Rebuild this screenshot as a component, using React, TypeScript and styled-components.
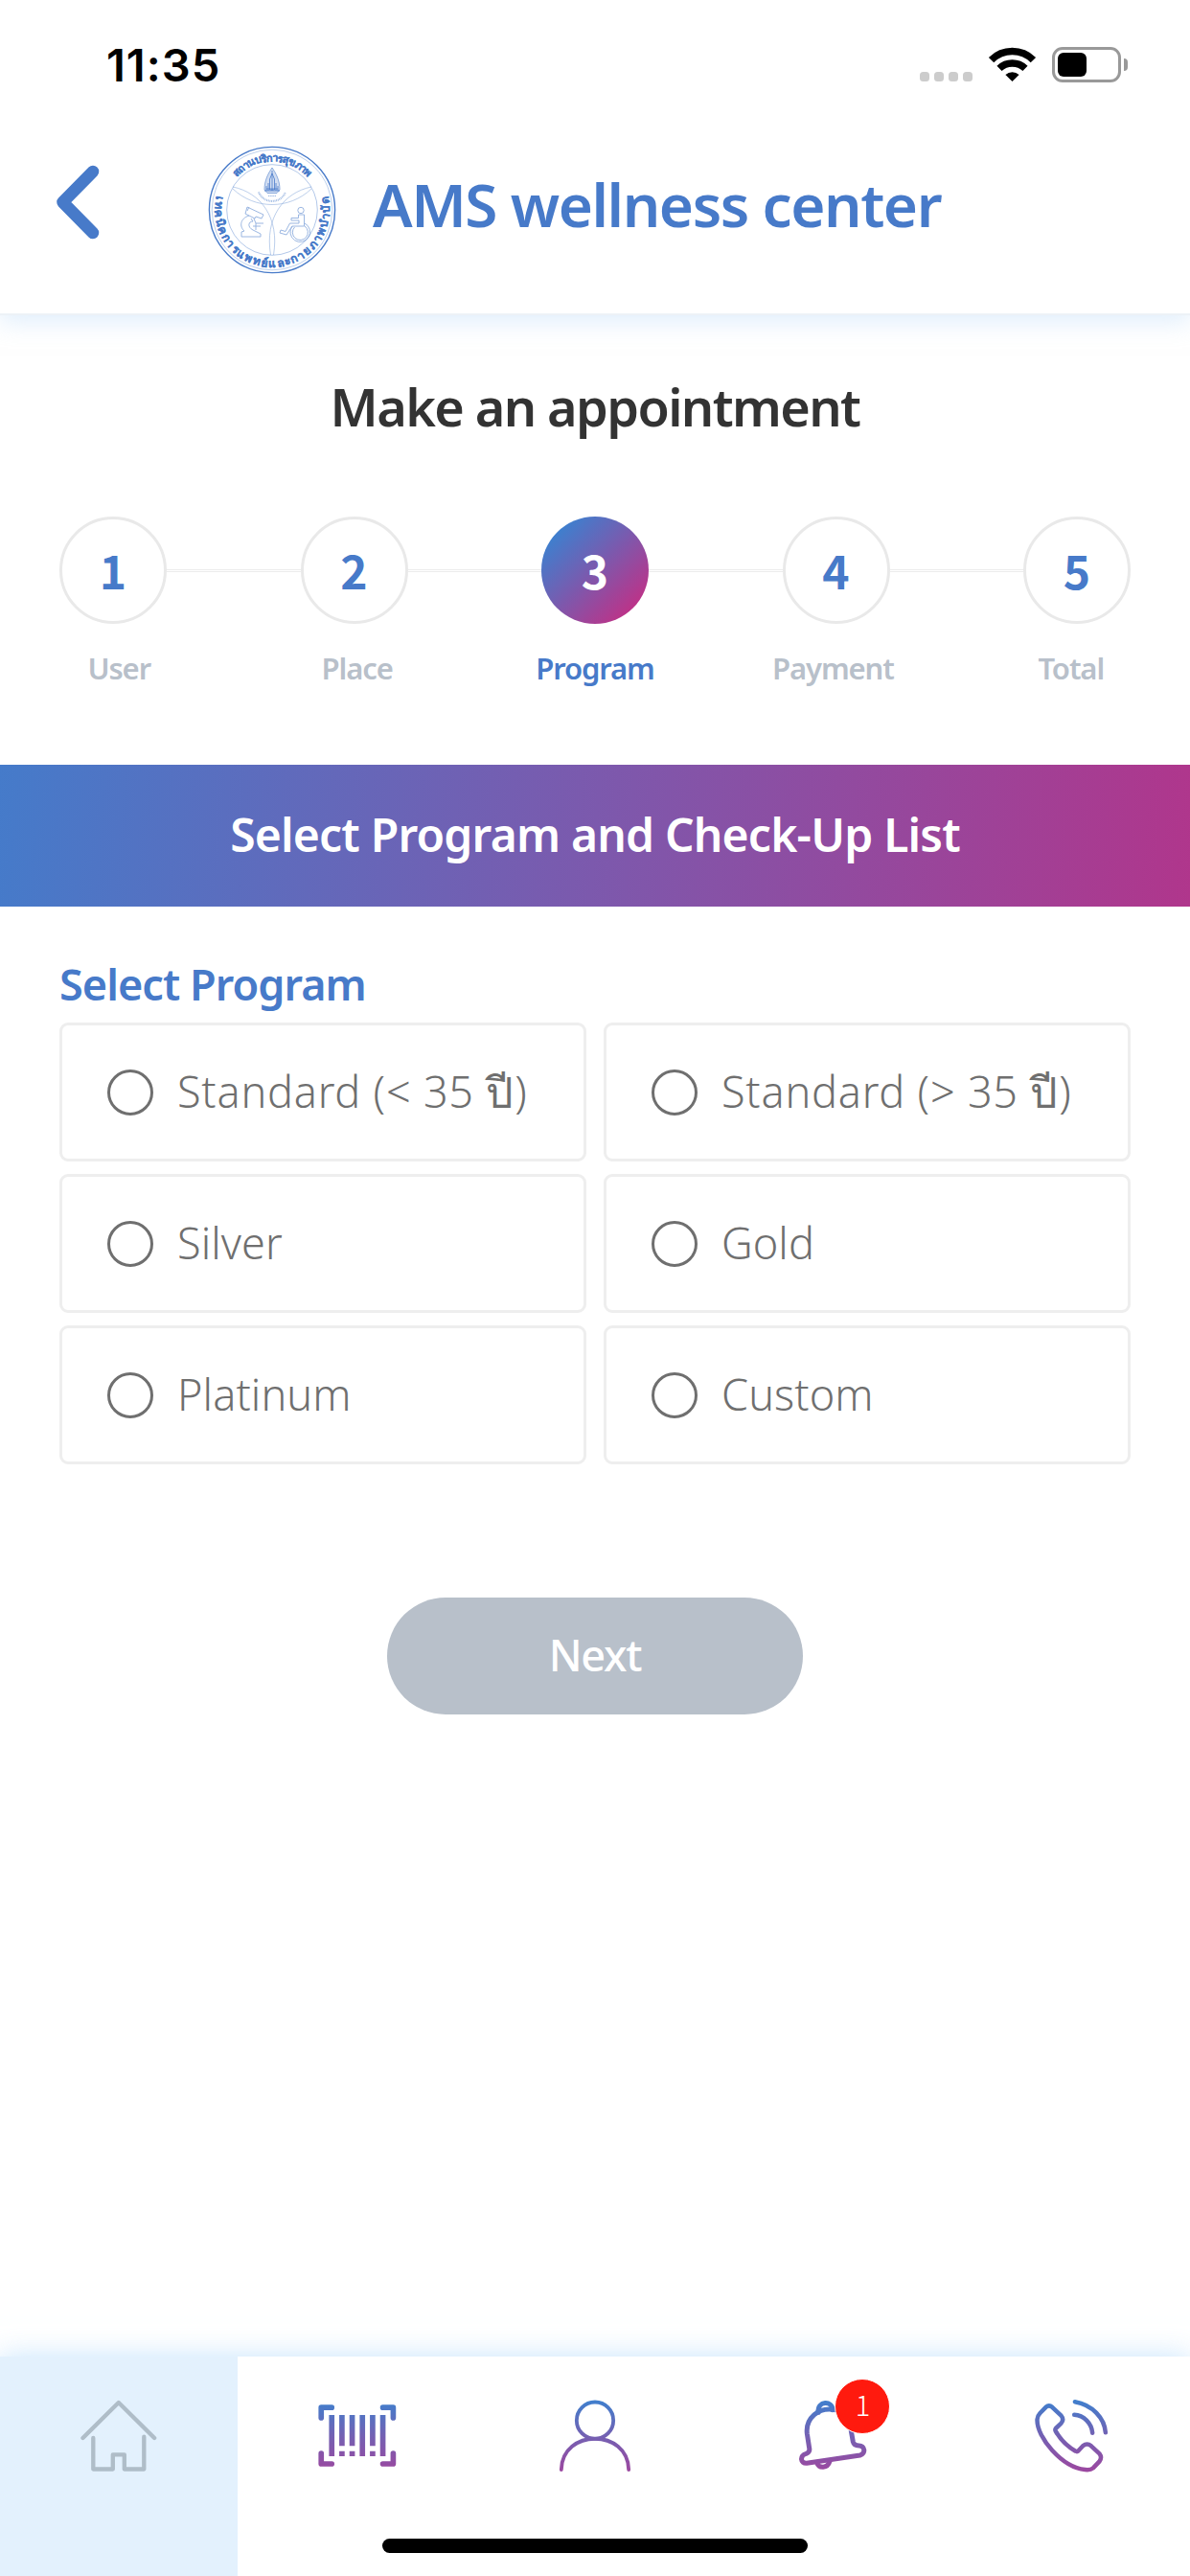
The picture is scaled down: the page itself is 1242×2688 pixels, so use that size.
import React, { useState } from "react";
import styled, { createGlobalStyle } from "styled-components";

const BLUE = "#477ac9";
const MUTED = "#b8c0ca";

const GlobalStyle = createGlobalStyle`
  * { box-sizing: border-box; }
  body {
    margin: 0;
    background: #fff;
    font-family: "Noto Sans", "Open Sans", sans-serif;
  }
  button { font: inherit; border: 0; background: none; padding: 0; margin: 0; }
  svg { display: block; overflow: visible; }
`;

const Screen = styled.div`
  width: 1242px;
  height: 2688px;
  margin: 0 auto;
  display: flex;
  flex-direction: column;
  background: #fff;
  overflow: hidden;
`;

/* ---------- header ---------- */

const Header = styled.header`
  height: 329px;
  flex: none;
  border-bottom: 2px solid #edf2f7;
  box-shadow: 0 6px 24px rgba(190, 220, 250, 0.5);
`;

const StatusBar = styled.div`
  height: 98px;
  display: flex;
  justify-content: space-between;
  padding: 0 65px 0 111px;
`;

const Clock = styled.div`
  font-family: Inter, sans-serif;
  font-weight: 600;
  font-size: 47px;
  line-height: 136px;
  height: 98px;
  letter-spacing: 1px;
  color: #000;
`;

const StatusIcons = styled.div`
  display: flex;
  align-items: flex-end;
  height: 86px;
`;

const SignalDots = styled.div`
  display: flex;
  gap: 5px;
  margin: 0 17px 1px 0;
`;

const Dot = styled.span`
  width: 10px;
  height: 10px;
  border-radius: 3.5px;
  background: #ccc;
`;

const WifiSvg = styled.svg`
  width: 49px;
  height: 36px;
  margin: 0 17px 1px 0;
`;

const Battery = styled.div`
  display: flex;
  align-items: center;
  gap: 3px;
`;

const BatteryBody = styled.div`
  width: 72px;
  height: 37px;
  border: 3px solid #999;
  border-radius: 11px;
  padding: 3px;
`;

const BatteryLevel = styled.div`
  width: 30px;
  height: 25px;
  border-radius: 6px;
  background: #000;
`;

const BatteryTip = styled.div`
  width: 4px;
  height: 13px;
  border-radius: 0 4px 4px 0;
  background: #999;
`;

const TitleBar = styled.div`
  display: flex;
  align-items: flex-start;
  padding-left: 57px;
`;

const BackButton = styled.button`
  width: 48px;
  height: 80px;
  margin-top: 73px;
`;

const LogoSvg = styled.svg`
  width: 136px;
  height: 136px;
  margin: 53px 0 0 111px;
`;

const AppTitle = styled.h1`
  margin: 73px 0 0 37px;
  font-size: 62px;
  line-height: 85px;
  font-weight: 620;
  letter-spacing: -1.45px;
  color: ${BLUE};
  white-space: nowrap;
`;

/* ---------- stepper ---------- */

const Heading = styled.h2`
  margin: 55px 0 0;
  font-size: 54px;
  line-height: 80px;
  font-weight: 600;
  letter-spacing: -1.6px;
  text-align: center;
  color: #333;
`;

const Steps = styled.div`
  display: flex;
  align-items: center;
  margin: 75px 62px 0;
`;

const StepCircle = styled.div<{ $active?: boolean }>`
  flex: none;
  width: 112px;
  height: 112px;
  border-radius: 50%;
  border: ${(p) => (p.$active ? "0" : "3px solid #e9e9e9")};
  background: ${(p) =>
    p.$active ? "linear-gradient(135deg, #3386d4 8%, #7c59ad 50%, #cb2a80 94%)" : "#fff"};
  color: ${(p) => (p.$active ? "#fff" : BLUE)};
  display: flex;
  align-items: center;
  justify-content: center;
  font-family: "Noto Sans CJK SC", "Noto Sans", sans-serif;
  font-size: 48px;
  line-height: 60px;
  font-weight: 700;
  padding-bottom: 2px;
`;

const StepLine = styled.div`
  flex: 1;
  height: 3px;
  margin-top: 1px;
  border: solid #ececec;
  border-width: 1px 0;
`;

const StepLabels = styled.div`
  display: grid;
  grid-template-columns: repeat(5, 1fr);
  margin-top: 26px;
`;

const StepLabel = styled.div<{ $active?: boolean }>`
  text-align: center;
  font-size: 31px;
  line-height: 40px;
  font-weight: 650;
  letter-spacing: -1.1px;
  color: ${(p) => (p.$active ? BLUE : MUTED)};
`;

/* ---------- program ---------- */

const Banner = styled.div`
  height: 148px;
  margin-top: 81px;
  padding-bottom: 4px;
  display: flex;
  align-items: center;
  justify-content: center;
  background: linear-gradient(95deg, #457bca 0%, #7c59ad 50%, #b0368c 100%);
  color: #fff;
  font-size: 48px;
  font-weight: 620;
  letter-spacing: -0.8px;
`;

const SectionTitle = styled.h3`
  margin: 51px 0 10px 62px;
  font-size: 45px;
  line-height: 60px;
  font-weight: 600;
  letter-spacing: -0.95px;
  color: ${BLUE};
`;

const Options = styled.div`
  display: grid;
  grid-template-columns: 1fr 1fr;
  grid-auto-rows: 145px;
  gap: 13px 18px;
  margin: 0 62px;
`;

const Option = styled.button`
  display: flex;
  align-items: center;
  gap: 25px;
  padding-left: 47px;
  border: 3px solid #eee;
  border-radius: 9px;
  background: #fff;
  color: #6f6f6f;
  text-align: left;
`;

const Radio = styled.span<{ $on: boolean }>`
  flex: none;
  width: 48px;
  height: 48px;
  border: 3px solid #6f6f6f;
  border-radius: 50%;
  background: ${(p) => (p.$on ? `radial-gradient(${BLUE} 45%, #fff 50%)` : "#fff")};
`;

const OptionText = styled.span<{ $wide?: boolean }>`
  font-size: 45px;
  line-height: 60px;
  font-weight: 330;
  letter-spacing: ${(p) => (p.$wide ? "0.8px" : "0.1px")};
  padding-bottom: 2px;
  white-space: nowrap;
`;

const ThaiText = styled.span`
  font-weight: 400;
`;

const NextButton = styled.button`
  width: 434px;
  height: 122px;
  margin: 139px auto 0;
  padding-bottom: 4px;
  border-radius: 61px;
  background: ${MUTED};
  color: #fff;
  font-size: 45px;
  font-weight: 500;
  letter-spacing: -1.2px;
`;

/* ---------- bottom navigation ---------- */

const BottomNav = styled.nav`
  position: relative;
  display: grid;
  grid-template-columns: repeat(5, 1fr);
  height: 229px;
  margin-top: auto;
  background: #fff;
  box-shadow: 0 0 28px rgba(170, 214, 250, 0.65);
`;

const NavItem = styled.a<{ $active?: boolean }>`
  display: flex;
  justify-content: center;
  align-items: flex-start;
  padding-top: 43px;
  background: ${(p) => (p.$active ? "#e3f1fd" : "transparent")};
`;

const IconBox = styled.span`
  position: relative;
  width: 80px;
  height: 80px;
`;

const NavSvg = styled.svg`
  width: 80px;
  height: 80px;
  fill: none;
  stroke-linecap: round;
  stroke-linejoin: round;
`;

const Badge = styled.span`
  position: absolute;
  left: 42px;
  top: -20px;
  width: 58px;
  height: 58px;
  border: 1px solid #fff;
  border-radius: 50%;
  background: #ff1a0e;
  color: #fff;
  font-family: "Noto Sans CJK SC", "Noto Sans", sans-serif;
  font-size: 29px;
  line-height: 50px;
  font-weight: 300;
  text-align: center;
`;

const HomeIndicator = styled.div`
  position: absolute;
  left: 399px;
  bottom: 24px;
  width: 444px;
  height: 15px;
  border-radius: 8px;
  background: #000;
`;

/* ---------- drawings ---------- */

const Wifi = () => (
  <WifiSvg viewBox="0 0 49 36">
    <g fill="none" stroke="#000">
      <path d="M2.6 13.6 A31 31 0 0 1 46.4 13.6" strokeWidth="7.6" />
      <path d="M11 22.4 A19.5 19.5 0 0 1 38 22.4" strokeWidth="7.4" />
    </g>
    <path d="M17.4 29 A10.5 10.5 0 0 1 31.6 29 L24.5 36 Z" fill="#000" />
  </WifiSvg>
);

const BackIcon = () => (
  <svg width="48" height="80" viewBox="0 0 48 80">
    <path
      d="M40 8 L8.500 40 L40 72"
      fill="none"
      stroke={BLUE}
      strokeWidth="12.5"
      strokeLinecap="round"
      strokeLinejoin="round"
    />
  </svg>
);

/* Clinic seal: two rings of lettering round three arcs, an emblem and two symbols. */
const Logo = () => (
  <LogoSvg viewBox="-68 -68 136 136" fill="none" stroke={BLUE}>
    <defs>
      <path id="sealTop" d="M-50.5 0 A50.5 50.5 0 0 1 50.5 0" />
      <path id="sealBottom" d="M-57.400 -17 A59.9 59.9 0 1 0 57.400 -17" />
    </defs>
    <circle r="65.6" strokeWidth="1.4" />
    <circle r="62.8" strokeWidth="0.6" opacity="0.6" />
    <circle r="47.3" strokeWidth="0.7" opacity="0.6" />
    <g strokeWidth="0.6" opacity="0.6">
      <path d="M-41 -22 C-18 0 18 0 41 -22" />
      <path d="M-41 -24 C-12 -18 8 8 1.5 47" />
      <path d="M41 -24 C12 -18 -8 8 -1.5 47" />
    </g>
    <g strokeWidth="0.8">
      <path d="M0 -44 C4 -38 8 -31 8 -21 L5 -17.5 H-5 L-8 -21 C-8 -31 -4 -38 0 -44 Z" fill="#c3d4ee" opacity="0.75" />
      <path d="M0 -41 V-20 M-2.5 -32 L0 -38 L2.5 -32 V-21 H-2.5 Z M-6 -25 V-20 M6 -25 V-20 M-4 -28 V-20 M4 -28 V-20 M-8 -20 H8 M-6 -22 H6" />
      <path d="M-4 -14.5 H4" strokeDasharray="1.4 0.8" opacity="0.7" />
      <path d="M-14 -18.5 C-9 -6 9 -6 14 -18.5" strokeWidth="2" strokeDasharray="0.9 0.8" opacity="0.55" />
    </g>
    <g strokeWidth="0.9" opacity="0.6">
      <path d="M-26 -3 L-9 5 L-11 9 L-17 7 L-18 9 L-28 4 Z M-24 -3 L-26 1" />
      <path d="M-24 6 C-34 9 -34 18 -29 22 L-32 23 V28 H-12 V25 L-20 21 C-26 18 -25 12 -20 12 L-22 9" />
      <path d="M-19 9 L-17 14 L-9 14 M-17 14 V21 M-20 17 H-12" />
      <circle cx="30" cy="0.5" r="3.2" />
      <path d="M27.5 5 H33.5 V17 H21 L15 26 L8 24 L9 21 L14 22.5 L18.5 14 H28 V11 H20 V8.5 H27.5 Z" />
      <path d="M21 17 A10.3 10.3 0 1 0 34 14 M23.5 18 A8 8 0 1 0 34 17" />
    </g>
    <g fill={BLUE} stroke={BLUE} strokeWidth="0.25" fontWeight="700">
      <text fontSize="11">
        <textPath href="#sealTop" startOffset="50%" textAnchor="middle" textLength="84">
          สถานบริการสุขภาพ
        </textPath>
      </text>
      <text fontSize="12">
        <textPath href="#sealBottom" startOffset="50%" textAnchor="middle" textLength="217">
          เทคนิคการแพทย์และกายภาพบำบัด
        </textPath>
      </text>
    </g>
  </LogoSvg>
);

const NavGradient = () => (
  <defs>
    <linearGradient id="navGradient" gradientUnits="userSpaceOnUse" x1="0" y1="225" x2="0" y2="450">
      <stop offset="0" stopColor="#407fcd" />
      <stop offset="0.5" stopColor="#7460b2" />
      <stop offset="1" stopColor="#9d479f" />
    </linearGradient>
  </defs>
);

const HomeIcon = () => (
  <NavSvg viewBox="252.6 216 240 240" stroke="#afbdc8" strokeWidth="13">
    <path d="M260 342 L372 231 L484 342" />
    <path d="M292.5 342 V439.5 H354 V394 H390 V439.5 H451.5 V338" />
  </NavSvg>
);

const BARS: [number, boolean][] = [
  [1037.5, false],
  [1069.5, true],
  [1101.5, true],
  [1133.5, false],
  [1165.5, true],
  [1197.5, false],
];

const ScanIcon = () => (
  <NavSvg viewBox="997.8 216 240 240" stroke="url(#navGradient)" strokeWidth="17">
    <NavGradient />
    <path d="M1004.5 279 V246.5 H1037.5 M1197.5 246.5 H1230 V279 M1230 390 V423 H1197.5 M1037.5 423 H1004.5 V390" />
    <g fill="url(#navGradient)" stroke="none">
      <path
        d={BARS.map(([x, split]) =>
          split
            ? `M${x - 8.5} 270 h17 v97 h-17 Z M${x - 8.5} 383 h17 v16 h-17 Z`
            : `M${x - 8.5} 270 h17 v129 h-17 Z`
        ).join(" ")}
      />
    </g>
  </NavSvg>
);

const PersonIcon = () => (
  <NavSvg viewBox="363 216 240 240" stroke="url(#navGradient)" strokeWidth="11.5">
    <circle cx="483" cy="287" r="57.5" />
    <path d="M377.5 441 C380 312 586 312 588.5 441" />
  </NavSvg>
);

const BellIcon = () => (
  <NavSvg viewBox="88 216 240 240" stroke="url(#navGradient)" strokeWidth="15">
    <path d="M216 254 C162 244 123 281 128 328 L135.5 377 Q136 387 125 391 C104 396 107 423 127 421 L294 396 C313 391 309 365 290 366 Q275 366 272 354 L258 274 Q240 256 216 254" />
    <path d="M163 262 C160 224 208 224 208 254" />
    <path d="M159 420 C165 438 192 438 199 415" />
  </NavSvg>
);

const PhoneIcon = () => (
  <NavSvg viewBox="833.4 216 240 240" stroke="url(#navGradient)" strokeWidth="13.5">
    <path d="M874 245.500 Q884 237 894 245.500 L922 272 Q932 284 922 296 L905 312 Q902 316 905 321 Q928 361 967 383 Q972 386 976 382 L990 367 Q1003 356 1016 367 L1042 391 Q1051 403 1042 415 L1022 436 Q1014 443 997 441 C925 434 845 340 847 284 Q848 272 856 264 Z" />
    <path d="M965 228.500 C1020 238 1058 280 1061 325" />
    <path d="M963 269.500 C993 271 1017 295 1020 326" />
  </NavSvg>
);

/* ---------- page ---------- */

const STEPS = ["User", "Place", "Program", "Payment", "Total"];
const CURRENT_STEP = 2;

const PROGRAMS = ["Standard (< 35 ปี)", "Standard (> 35 ปี)", "Silver", "Gold", "Platinum", "Custom"];

/* Thai runs get their own weight, since the light cut exists for Latin only. */
const mixedScript = (text: string) =>
  text
    .split(/([\u0E00-\u0E7F]+)/)
    .map((part, i) => (i % 2 ? <ThaiText key={i}>{part}</ThaiText> : part));

export default function App() {
  const [selected, setSelected] = useState<string | null>(null);

  return (
    <Screen>
      <GlobalStyle />
      <Header>
        <StatusBar>
          <Clock>11:35</Clock>
          <StatusIcons>
            <SignalDots>
              <Dot />
              <Dot />
              <Dot />
              <Dot />
            </SignalDots>
            <Wifi />
            <Battery>
              <BatteryBody>
                <BatteryLevel />
              </BatteryBody>
              <BatteryTip />
            </Battery>
          </StatusIcons>
        </StatusBar>
        <TitleBar>
          <BackButton aria-label="Back">
            <BackIcon />
          </BackButton>
          <Logo />
          <AppTitle>AMS wellness center</AppTitle>
        </TitleBar>
      </Header>

      <Heading>Make an appointment</Heading>
      <Steps>
        {STEPS.map((step, i) => (
          <React.Fragment key={step}>
            {i > 0 && <StepLine />}
            <StepCircle $active={i === CURRENT_STEP}>{i + 1}</StepCircle>
          </React.Fragment>
        ))}
      </Steps>
      <StepLabels>
        {STEPS.map((step, i) => (
          <StepLabel key={step} $active={i === CURRENT_STEP}>
            {step}
          </StepLabel>
        ))}
      </StepLabels>

      <Banner>Select Program and Check-Up List</Banner>
      <SectionTitle>Select Program</SectionTitle>
      <Options>
        {PROGRAMS.map((name) => (
          <Option key={name} onClick={() => setSelected(name)}>
            <Radio $on={selected === name} />
            <OptionText $wide={name.length > 10}>{mixedScript(name)}</OptionText>
          </Option>
        ))}
      </Options>
      <NextButton>Next</NextButton>

      <BottomNav>
        <NavItem $active>
          <HomeIcon />
        </NavItem>
        <NavItem>
          <ScanIcon />
        </NavItem>
        <NavItem>
          <PersonIcon />
        </NavItem>
        <NavItem>
          <IconBox>
            <BellIcon />
            <Badge>1</Badge>
          </IconBox>
        </NavItem>
        <NavItem>
          <PhoneIcon />
        </NavItem>
        <HomeIndicator />
      </BottomNav>
    </Screen>
  );
}
